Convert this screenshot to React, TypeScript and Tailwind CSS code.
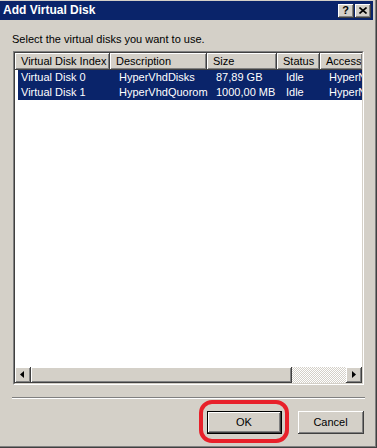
import React from "react";

const FONT = "font-['Liberation_Sans',Arial,sans-serif]";

const columns = [
  { label: "Virtual Disk Index", w: "w-[95px]" },
  { label: "Description", w: "w-[97px]" },
  { label: "Size", w: "w-[70px]" },
  { label: "Status", w: "w-[43px]" },
  { label: "Access", w: "w-[43px]" },
];

const disks = [
  ["Virtual Disk 0", "HyperVhdDisks", "87,89 GB", "Idle", "HyperNode"],
  ["Virtual Disk 1", "HyperVhdQuorom", "1000,00 MB", "Idle", "HyperNode"],
];

function Raised({ className = "", children }: { className?: string; children?: React.ReactNode }) {
  // classic 3D raised edge: light top/left, dark bottom/right
  return (
    <div className={`border-r border-b border-[#404040] ${className}`}>
      <div className="h-full border-t border-l border-white">
        <div className="h-full border-r border-b border-[#808080] bg-[#d4d0c8]">{children}</div>
      </div>
    </div>
  );
}

function Arrow({ dir }: { dir: "left" | "right" }) {
  return (
    <svg width="4" height="7" viewBox="0 0 4 7">
      {dir === "left" ? <path d="M4 0 L0 3.5 L4 7 Z" fill="#000" /> : <path d="M0 0 L4 3.5 L0 7 Z" fill="#000" />}
    </svg>
  );
}

export default function App() {
  return (
    <div className={`relative w-[377px] h-[448px] overflow-hidden ${FONT} text-[11px] leading-[13px] text-black`}>
      {/* window frame */}
      <div className="h-full border-r border-b border-[#404040]">
        <div className="h-full border-r border-b border-[#808080] bg-[#d4d0c8] pt-px">
          {/* title bar */}
          <div className="h-[19px] mr-[2px] bg-[#0a246a] flex items-center justify-between pl-[3px] pr-[2px]">
            <span className="text-white font-bold text-[12px]">Add Virtual Disk</span>
            <div className="flex gap-px">
              <Raised className="w-[16px] h-[14px]">
                <div className="h-full flex items-center justify-center font-bold text-[11px] leading-none">?</div>
              </Raised>
              <Raised className="w-[16px] h-[14px]">
                <div className="h-full flex items-center justify-center">
                  <svg width="8" height="7" viewBox="0 0 8 7">
                    <path d="M0.5 0.5 L7.5 6.5 M7.5 0.5 L0.5 6.5" stroke="#000" strokeWidth="1.6" />
                  </svg>
                </div>
              </Raised>
            </div>
          </div>

          {/* body */}
          <div className="pl-[12px] pt-[13px]">Select the virtual disks you want to use.</div>

          {/* list view */}
          <div className="ml-[13px] mt-[5px] w-[351px] h-[334px] border-t border-l border-[#808080] border-r border-b border-r-white border-b-white">
            <div className="h-full border-t border-l border-[#404040] border-r border-b border-r-[#d4d0c8] border-b-[#d4d0c8] bg-white flex flex-col">
              <div className="flex h-[17px] overflow-hidden">
                {columns.map((c) => (
                  <Raised key={c.label} className={`${c.w} shrink-0 h-[17px]`}>
                    <div className="pl-[5px] pt-px whitespace-nowrap overflow-hidden">{c.label}</div>
                  </Raised>
                ))}
              </div>
              <div className="flex-1 overflow-hidden">
                {disks.map((row, i) => (
                  <div key={i} className="flex h-[15px] pl-[3px]">
                    <div className="flex flex-1 bg-[#0a246a] text-white items-center">
                      {row.map((cell, j) => (
                        <div
                          key={j}
                          className={`${columns[j].w} ${j === 0 ? "pl-[3px] w-[92px]" : "pl-[6px]"} shrink-0 whitespace-nowrap overflow-hidden`}
                        >
                          {cell}
                        </div>
                      ))}
                    </div>
                  </div>
                ))}
              </div>
              {/* horizontal scrollbar */}
              <div className="flex h-[16px]">
                <Raised className="w-[16px] h-[16px]">
                  <div className="h-full flex items-center justify-center pr-px">
                    <Arrow dir="left" />
                  </div>
                </Raised>
                <Raised className="w-[261px] h-[16px]" />
                <div className="flex-1 bg-[image:repeating-conic-gradient(#ffffff_0_25%,#d4d0c8_0_50%)] bg-[length:2px_2px]" />
                <Raised className="w-[16px] h-[16px]">
                  <div className="h-full flex items-center justify-center pl-px">
                    <Arrow dir="right" />
                  </div>
                </Raised>
              </div>
            </div>
          </div>

          {/* etched separator */}
          <div className="ml-[12px] mt-[12px] w-[353px] border-t border-[#808080] border-b border-b-white" />

          {/* buttons */}
          <div className="flex mt-[12px] pl-[207px] gap-[16px]">
            <div className="w-[75px] h-[23px] border border-black">
              <Raised className="h-full">
                <div className="h-full flex items-center justify-center">OK</div>
              </Raised>
            </div>
            <Raised className="w-[66px] h-[23px]">
              <div className="h-full flex items-center justify-center">Cancel</div>
            </Raised>
          </div>
        </div>
      </div>

      {/* red highlight annotation */}
      <div className="absolute left-[199px] top-[400px] w-[90px] h-[43px] border-[4px] border-[#e8202a] rounded-[13px]" />
    </div>
  );
}
